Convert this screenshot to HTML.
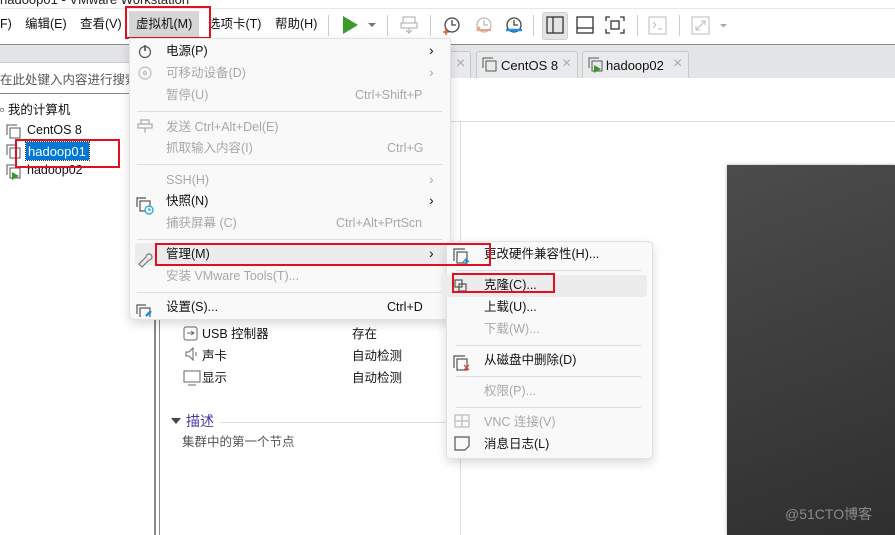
<!DOCTYPE html>
<html><head><meta charset="utf-8"><style>
*{margin:0;padding:0;box-sizing:border-box}
body{width:895px;height:535px;overflow:hidden;background:#fff;position:relative;font-family:"Liberation Sans","Noto Sans CJK SC",sans-serif;font-size:12.5px;line-height:13px;color:#111}
.a{position:absolute;white-space:nowrap}
.g{color:#a8a8a8}
.sep{position:absolute;height:1px;background:#dcdcdc}
.rb{position:absolute;border:2px solid #e01020}
</style></head><body>
<div class="a" style="left:0;top:-7px;font-size:13px;color:#222">hadoop01 - VMware Workstation</div>
<div class="a" style="left:0;top:8px;width:895px;height:1px;background:#e6e6e6"></div>
<div class="a" style="left:129px;top:11px;width:70px;height:26px;background:#d6d6d6"></div>
<div class="a" style="left:0;top:18px">F)</div>
<div class="a" style="left:25px;top:18px">编辑(E)</div>
<div class="a" style="left:80px;top:18px">查看(V)</div>
<div class="a" style="left:136px;top:18px">虚拟机(M)</div>
<div class="a" style="left:208px;top:18px">选项卡(T)</div>
<div class="a" style="left:275px;top:18px">帮助(H)</div>
<div class="rb" style="left:125px;top:6px;width:86px;height:33px"></div>
<div class="a" style="left:328px;top:15px;width:1px;height:21px;background:#ccc"></div>
<svg class="a" style="left:340px;top:15px" width="40" height="20"><path d="M3 1 L18 10 L3 19Z" fill="#3a9a2a"/><path d="M28 8 L36 8 L32 12Z" fill="#777"/></svg>
<div class="a" style="left:387px;top:15px;width:1px;height:21px;background:#ccc"></div>
<svg class="a" style="left:400px;top:15px" width="20" height="20" fill="none" stroke="#aaa"><rect x="3" y="2" width="12" height="6"/><rect x="1" y="8" width="16" height="5"/><path d="M9 13v5M6 15l3 3 3-3"/></svg>
<div class="a" style="left:430px;top:15px;width:1px;height:21px;background:#ccc"></div>
<svg class="a" style="left:442px;top:15px" width="100" height="22" fill="none" stroke-width="1.3"><circle cx="10" cy="10" r="7" stroke="#444"/><path d="M10 5v5h4" stroke="#444"/><path d="M4 14v6M1 17h6" stroke="#e04010"/>
<circle cx="42" cy="10" r="7" stroke="#bbb"/><path d="M42 5v5h4" stroke="#bbb"/><path d="M35 15h14M35 15l3-3" stroke="#f0a080" stroke-width="2"/>
<circle cx="72" cy="10" r="7" stroke="#444"/><path d="M72 5v5h4" stroke="#444"/><path d="M64 15h16" stroke="#2090e0" stroke-width="2.5"/></svg>
<div class="a" style="left:533px;top:15px;width:1px;height:21px;background:#ccc"></div>
<div class="a" style="left:542px;top:12px;width:26px;height:28px;background:#e4e4e4;border:1px solid #d0d0d0;border-radius:3px"></div>
<svg class="a" style="left:545px;top:16px" width="90" height="20" fill="none" stroke="#333" stroke-width="1.3"><rect x="2" y="1" width="16" height="16"/><path d="M8 1v16"/><rect x="32" y="1" width="16" height="16"/><path d="M32 12h16"/><rect x="66" y="5" width="8" height="8"/><path d="M61 5V1h4M75 1h4v4M79 13v4h-4M65 17h-4v-4"/></svg>
<div class="a" style="left:637px;top:15px;width:1px;height:21px;background:#ccc"></div>
<svg class="a" style="left:648px;top:16px" width="20" height="20" fill="none" stroke="#bbb"><rect x="1" y="1" width="17" height="17"/><path d="M5 6l3 3-3 3M10 13h4"/></svg>
<div class="a" style="left:679px;top:15px;width:1px;height:21px;background:#ccc"></div>
<svg class="a" style="left:691px;top:16px" width="40" height="20" fill="none" stroke="#bbb"><rect x="1" y="1" width="17" height="17"/><path d="M5 14l9-9M10 5h4v4M5 10v4h4"/><path d="M29 8h7l-3.5 3.5Z" fill="#aaa" stroke="none"/></svg>
<div class="a" style="left:0;top:44px;width:895px;height:1px;background:#8a8a8a"></div>
<div class="a" style="left:0;top:45px;width:895px;height:33px;background:#e4e5e7"></div>
<div class="a" style="left:0;top:62px;width:130px;height:32px;background:#fff;border-top:1px solid #ccc"></div>
<div class="a" style="left:0;top:74px;color:#555">在此处键入内容进行搜索</div>
<div class="a" style="left:0;top:93px;width:130px;height:1px;background:#888"></div>
<div class="a" style="left:440px;top:51px;width:31px;height:27px;background:#e9eaec;border:1px solid #c8c8c8;border-bottom:none;border-radius:3px 3px 0 0"></div>
<div class="a" style="left:456px;top:57px;color:#aaa;font-size:16px">×</div>
<div class="a" style="left:476px;top:51px;width:102px;height:27px;background:#e9eaec;border:1px solid #c8c8c8;border-bottom:none;border-radius:3px 3px 0 0"></div>
<svg class="a" style="left:482px;top:57px" width="16" height="16" fill="none" stroke="#555"><path d="M1 11V1h10"/><rect x="4" y="4" width="10" height="10"/></svg>
<div class="a" style="left:501px;top:59px;font-size:13px">CentOS 8</div>
<div class="a" style="left:562px;top:57px;color:#aaa;font-size:16px">×</div>
<div class="a" style="left:582px;top:51px;width:107px;height:27px;background:#e9eaec;border:1px solid #c8c8c8;border-bottom:none;border-radius:3px 3px 0 0"></div>
<svg class="a" style="left:588px;top:57px" width="16" height="16" fill="none" stroke="#555"><path d="M1 11V1h10"/><rect x="4" y="4" width="10" height="10"/><path d="M6 8l7 4-7 4Z" fill="#3a9a2a" stroke="none"/></svg>
<div class="a" style="left:606px;top:59px;font-size:13px">hadoop02</div>
<div class="a" style="left:673px;top:57px;color:#aaa;font-size:16px">×</div>
<div class="a" style="left:450px;top:121px;width:445px;height:1px;background:#ddd"></div>
<div class="a" style="left:460px;top:121px;width:1px;height:414px;background:#ddd"></div>
<div class="a" style="left:0;top:104px">▫ 我的计算机</div>
<svg class="a" style="left:6px;top:124px" width="16" height="60" fill="none" stroke="#555"><path d="M1 11V1h10"/><rect x="4" y="4" width="10" height="10"/><path d="M1 31V21h10"/><rect x="4" y="24" width="10" height="10"/><path d="M1 51V41h10"/><rect x="4" y="44" width="10" height="10"/><path d="M6 48l7 4-7 4Z" fill="#3a9a2a" stroke="none"/></svg>
<div class="a" style="left:27px;top:124px">CentOS 8</div>
<div class="a" style="left:26px;top:142px;width:63px;height:18px;background:#0078d7;outline:1px dotted #333"></div>
<div class="a" style="left:28px;top:145px;color:#fff;font-size:13px">hadoop01</div>
<div class="a" style="left:27px;top:164px">hadoop02</div>
<div class="rb" style="left:15px;top:139px;width:105px;height:29px"></div>
<div class="a" style="left:154px;top:300px;width:2px;height:235px;background:#888"></div>
<div class="a" style="left:159px;top:300px;width:1px;height:235px;background:#888"></div>
<svg class="a" style="left:183px;top:325px" width="20" height="64" fill="none" stroke="#666"><rect x="1" y="2" width="13" height="13" rx="2"/><path d="M4 8h7M8 6l3 2-3 2"/><path d="M3 27h3l4-4v12l-4-4H3Z"/><path d="M13 27v4"/><rect x="1" y="46" width="16" height="11"/><path d="M5 60h8"/></svg>
<div class="a" style="left:202px;top:328px">USB 控制器</div>
<div class="a" style="left:352px;top:328px">存在</div>
<div class="a" style="left:202px;top:350px">声卡</div>
<div class="a" style="left:352px;top:350px">自动检测</div>
<div class="a" style="left:202px;top:372px">显示</div>
<div class="a" style="left:352px;top:372px">自动检测</div>
<div class="a" style="left:171px;top:418px;width:0;height:0;border:5px solid transparent;border-top:6px solid #445;border-bottom:none"></div>
<div class="a" style="left:186px;top:415px;color:#4a3aa8;font-size:14px">描述</div>
<div class="a" style="left:220px;top:422px;width:230px;height:1px;background:#ddd"></div>
<div class="a" style="left:182px;top:436px;color:#555">集群中的第一个节点</div>
<div class="a" style="left:727px;top:165px;width:168px;height:370px;background:linear-gradient(160deg,#4c4c4c,#2f2f2f);box-shadow:0 0 3px #aaa"></div>
<div class="a" style="left:785px;top:508px;color:#8a8a8a;font-size:14px">@51CTO博客</div>
<div class="a" style="left:129px;top:38px;width:322px;height:282px;background:#f9f9f9;border:1px solid #e2e2e2;border-radius:0 0 6px 6px;box-shadow:0 4px 10px rgba(0,0,0,.15)"></div>
<div class="a" style="left:135px;top:243px;width:312px;height:22px;background:#ececec;border-radius:4px"></div>
<svg class="a" style="left:136px;top:42px" width="20" height="275" fill="none" stroke="#555" stroke-width="1.2">
<circle cx="9" cy="10" r="5.5"/><path d="M9 3v6" stroke-width="1.6"/>
<circle cx="9" cy="31" r="6" stroke="#bbb"/><circle cx="9" cy="31" r="1.5" stroke="#bbb"/>
<g stroke="#aaa"><rect x="5" y="78" width="8" height="4"/><rect x="2" y="82" width="14" height="4"/><path d="M9 86v5"/></g>
<path d="M1 165v-9h9" /><rect x="4" y="159" width="10" height="10"/><circle cx="13" cy="168" r="4" stroke="#1aa0d8" fill="#f9f9f9"/><path d="M13 166v2h2" stroke="#1aa0d8"/>
<path d="M3 222l7-7a3 3 0 1 1 3 3l-7 7Z" stroke="#777"/>
<path d="M1 272v-9h9"/><rect x="4" y="266" width="10" height="10"/><path d="M10 274l5-5" stroke="#1a90d8" stroke-width="2.5"/>
</svg>
<div class="a" style="left:166px;top:45px">电源(P)</div>
<div class="a g" style="left:166px;top:67px">可移动设备(D)</div>
<div class="a g" style="left:166px;top:89px">暂停(U)</div>
<div class="a g" style="left:355px;top:89px">Ctrl+Shift+P</div>
<div class="sep" style="left:137px;top:111px;width:305px"></div>
<div class="a g" style="left:166px;top:121px">发送 Ctrl+Alt+Del(E)</div>
<div class="a g" style="left:166px;top:142px">抓取输入内容(I)</div>
<div class="a g" style="left:387px;top:142px">Ctrl+G</div>
<div class="sep" style="left:137px;top:164px;width:305px"></div>
<div class="a g" style="left:166px;top:174px">SSH(H)</div>
<div class="a" style="left:166px;top:195px">快照(N)</div>
<div class="a g" style="left:166px;top:217px">捕获屏幕 (C)</div>
<div class="a g" style="left:336px;top:217px">Ctrl+Alt+PrtScn</div>
<div class="sep" style="left:137px;top:239px;width:305px"></div>
<div class="a" style="left:166px;top:248px">管理(M)</div>
<div class="a g" style="left:166px;top:270px">安装 VMware Tools(T)...</div>
<div class="sep" style="left:137px;top:292px;width:305px"></div>
<div class="a" style="left:166px;top:301px">设置(S)...</div>
<div class="a" style="left:387px;top:301px">Ctrl+D</div>
<div class="a" style="left:429px;top:44px;font-size:14px">›</div>
<div class="a g" style="left:429px;top:66px;font-size:14px">›</div>
<div class="a g" style="left:429px;top:173px;font-size:14px">›</div>
<div class="a" style="left:429px;top:194px;font-size:14px">›</div>
<div class="a" style="left:429px;top:247px;font-size:14px">›</div>
<div class="a" style="left:446px;top:241px;width:207px;height:218px;background:#f9f9f9;border:1px solid #e2e2e2;border-radius:5px;box-shadow:0 4px 10px rgba(0,0,0,.15)"></div>
<div class="a" style="left:441px;top:275px;width:206px;height:22px;background:#ececec;border-radius:4px"></div>
<svg class="a" style="left:453px;top:245px" width="20" height="210" fill="none" stroke="#555" stroke-width="1.2">
<path d="M1 16V4h11"/><rect x="4" y="7" width="10" height="11"/><path d="M13 14v6M10 17l3-3 3 3" stroke="#1a90d8"/>
<rect x="2" y="35" width="7" height="7"/><rect x="6" y="39" width="7" height="7"/>
<path d="M1 123V111h11"/><rect x="4" y="114" width="10" height="11"/><path d="M11 120l5 5M16 120l-5 5" stroke="#e03030"/>
<g stroke="#bbb"><rect x="2" y="170" width="14" height="12"/><path d="M2 176h14M9 170v12"/></g>
<path d="M2 192h14v9l-4 4H2Z"/>
</svg>
<div class="a" style="left:484px;top:248px">更改硬件兼容性(H)...</div>
<div class="sep" style="left:456px;top:270px;width:185px"></div>
<div class="a" style="left:484px;top:279px">克隆(C)...</div>
<div class="a" style="left:484px;top:301px">上载(U)...</div>
<div class="a g" style="left:484px;top:323px">下载(W)...</div>
<div class="sep" style="left:456px;top:345px;width:185px"></div>
<div class="a" style="left:484px;top:354px">从磁盘中删除(D)</div>
<div class="sep" style="left:456px;top:376px;width:185px"></div>
<div class="a g" style="left:484px;top:385px">权限(P)...</div>
<div class="sep" style="left:456px;top:407px;width:185px"></div>
<div class="a g" style="left:484px;top:416px">VNC 连接(V)</div>
<div class="a" style="left:484px;top:438px">消息日志(L)</div>
<div class="rb" style="left:155px;top:243px;width:336px;height:23px"></div>
<div class="rb" style="left:452px;top:273px;width:103px;height:20px"></div>
</body></html>
